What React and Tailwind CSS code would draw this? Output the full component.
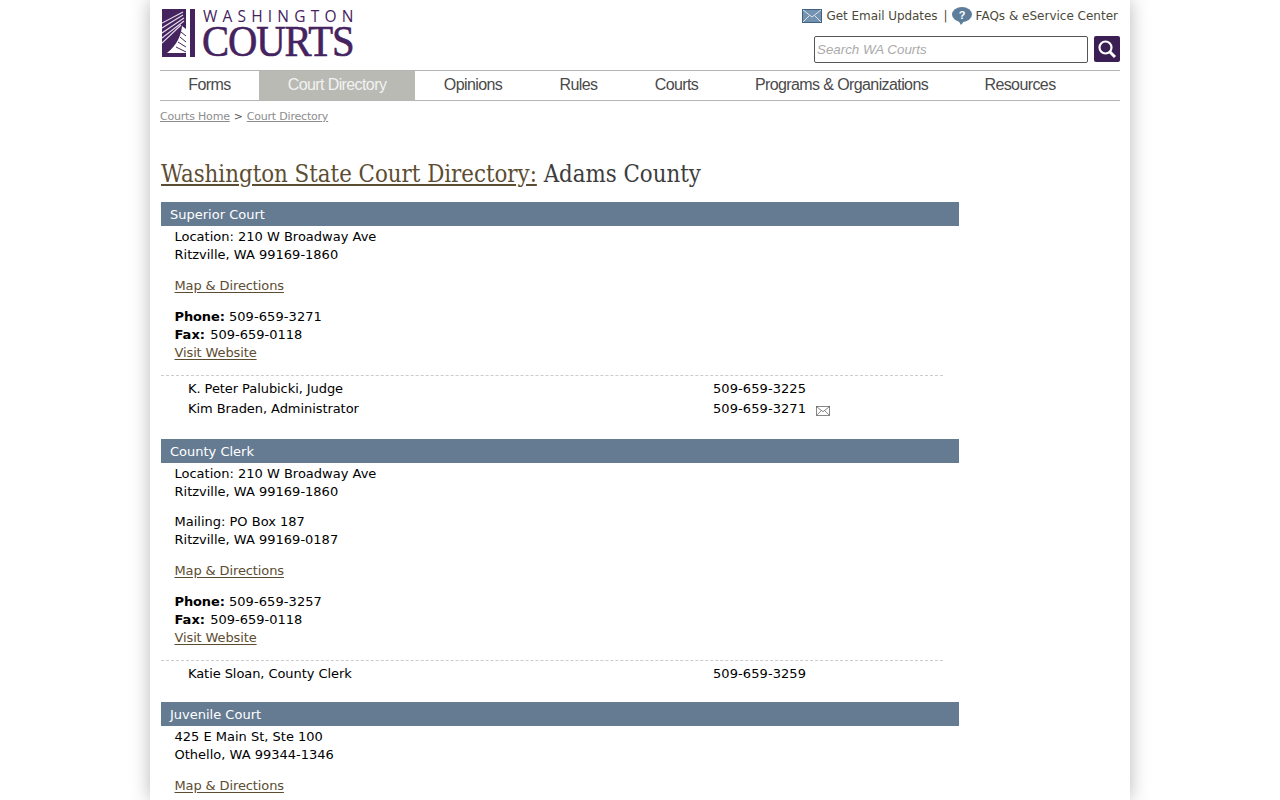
const verdana = "font-['DejaVu_Sans',sans-serif]";

function Logo() {
  return (
    <div className="relative w-[194px] h-[60px]">
      <svg width="34" height="48" viewBox="0 0 34 48" className="absolute left-[2px] top-[9px]">
        <rect width="24" height="48" fill="#45235f" />
        <rect x="28" width="5" height="48" fill="#45235f" />
        <g stroke="#e6dfeb" fill="none" strokeWidth="1.1">
          <path d="M0 14 L21 3" />
          <path d="M0 19 L21 6" />
          <path d="M0 24 L22 9" />
          <path d="M0 29 L22 12" />
          <path d="M0 34 L19 16" />
        </g>
        <path d="M20 17 C19 27 15 36 5 44 L24 44 L24 20 Z" fill="#fff" />
        <path d="M14 38 L24 43 M16 33 L24 38 M18 28 L24 33 M19 23 L24 27" stroke="#45235f" strokeWidth="1" />
        <path d="M24 0 L28 0 L28 48 L24 48Z" fill="#fff" />
      </svg>
      <div className="absolute left-[43px] top-[9px] font-['Open_Sans',sans-serif] text-[15.5px] leading-[14px] tracking-[5.2px] text-[#45235f] whitespace-nowrap">WASHINGTON</div>
      <div className="absolute left-[42px] top-[26px] font-['Liberation_Serif',serif] text-[44px] leading-[32px] tracking-[-1.2px] text-[#45235f] whitespace-nowrap origin-left scale-x-[0.925] [-webkit-text-stroke:0.6px_#45235f]">COURTS</div>
    </div>
  );
}

function Nav() {
  const items = [
    ["Forms", "w-[99px]"],
    ["Court Directory", "w-[156px]"],
    ["Opinions", "w-[116px]"],
    ["Rules", "w-[95px]"],
    ["Courts", "w-[101px]"],
    ["Programs & Organizations", "w-[229px]"],
    ["Resources", "w-[128px]"],
  ];
  return (
    <nav className="mt-[10px] flex h-[31px] border-y border-[#b5b5b5] font-['Liberation_Sans',sans-serif] text-[16px] tracking-[-0.6px] leading-[28px] text-[#4a4a4a]">
      {items.map(([t, w], i) => (
        <div key={t} className={`${w} text-center ${i === 1 ? "bg-[#b9bab4] text-[#f2f2f2]" : ""}`}>{t}</div>
      ))}
    </nav>
  );
}

function Mail({ className, stroke = "#555", fill = "#fff", line }) {
  return (
    <svg viewBox="0 0 20 14" className={className}>
      <rect x="0.5" y="0.5" width="19" height="13" fill={fill} stroke={stroke} />
      <path d="M1 1 L10 8 L19 1 M1 13 L7.5 6.5 M19 13 L12.5 6.5" fill="none" stroke={line || stroke} />
    </svg>
  );
}

function Line({ children }) {
  return <div className="h-[18px] leading-[18px]">{children}</div>;
}

function A({ children }) {
  return <a className="underline text-[#5c4d32] underline-offset-2 tracking-[-0.12px]">{children}</a>;
}

function Contact({ name, phone, mail }) {
  return (
    <div className={`flex leading-[20px] pl-[27px] ${mail ? "h-[22px]" : "h-[20px]"}`}>
      <div className="w-[525px] tracking-[-0.07px]">{name}</div>
      <div className="flex items-start tracking-[0.08px]">
        {phone}
        {mail && <Mail className="ml-[10px] mt-[7px] w-[14px] h-[10px]" />}
      </div>
    </div>
  );
}

function Section({ title, address, mailing, phone, fax, contacts }) {
  return (
    <section className="w-[798px] mb-[9px]">
      <h2 className="h-[24px] leading-[25px] bg-[#657b92] pl-[9px] text-white font-normal text-[13px]">{title}</h2>
      <div className="pl-[13.5px] pt-[2px]">
        <div className={mailing ? "mb-[12px]" : "mb-[13px]"}>{address.map((l) => <Line key={l}>{l}</Line>)}</div>
        {mailing && <div className="mb-[13px]">{mailing.map((l) => <Line key={l}>{l}</Line>)}</div>}
        <div className="mb-[13px]"><Line><A>Map &amp; Directions</A></Line></div>
        {phone && (
          <div>
            <Line><b className="tracking-[-0.12px]">Phone:</b> <span className="tracking-[0.08px]">{phone}</span></Line>
            <Line><b>Fax:</b> <span className="ml-[1px]">{fax}</span></Line>
            <Line><A>Visit Website</A></Line>
          </div>
        )}
      </div>
      {contacts && (
        <div className="w-[782px] mt-[13px] border-t border-dashed border-[#cccccc] pt-[3px] pb-[9px]">
          {contacts.map((c) => <Contact key={c.name} {...c} />)}
        </div>
      )}
    </section>
  );
}

export default function App() {
  return (
    <div className="h-[800px] overflow-hidden bg-white">
      <div className={`mx-auto w-[980px] h-[800px] px-[10px] bg-white shadow-[0_0_18px_rgba(0,0,0,0.28)] ${verdana} text-[13px] text-black`}>
        <header className="flex justify-between h-[60px]">
          <Logo />
          <div className="flex flex-col items-end">
            <div className="flex items-center h-[14px] mt-[9px] text-[#4c4a3c] text-[12px] whitespace-nowrap">
              <Mail className="w-[20px] h-[14px] mr-[5px]" stroke="#3f6080" fill="#7392af" line="#dce4ec" />
              <span className="tracking-[-0.06px]">Get Email Updates</span>
              <span className="ml-[6px] mr-[4px]">|</span>
              <svg viewBox="0 0 20 18" className="w-[20px] h-[18px] mr-[4px]">
                <ellipse cx="10" cy="7.5" rx="10" ry="7.5" fill="#5e7d9b" />
                <path d="M6 13 L13 13 L9 18Z" fill="#5e7d9b" />
                <text x="10" y="11.5" fontSize="11" fontWeight="700" fill="#fff" textAnchor="middle" fontFamily="Liberation Sans">?</text>
              </svg>
              <span className="mr-[2px]">FAQs &amp; eService Center</span>
            </div>
            <div className="flex mt-[13px]">
              <div className="w-[274px] h-[27px] border border-[#555] rounded-[2px] pl-[2px] font-['Liberation_Sans',sans-serif] italic text-[13.33px] leading-[25px] text-[#aaa]">Search WA Courts</div>
              <div className="ml-[6px] w-[26px] h-[26px] rounded-[2px] bg-[#3b1f54] flex items-center justify-center">
                <svg viewBox="0 0 20 20" className="w-[20px] h-[20px]" fill="none" stroke="#fff" strokeWidth="2.2">
                  <circle cx="8.5" cy="8.5" r="6" />
                  <path d="M13 13 L18 18" strokeWidth="3" />
                </svg>
              </div>
            </div>
          </div>
        </header>
        <Nav />
        <div className="mt-[9px] text-[11px] leading-[14px] tracking-[-0.2px] text-[#777]">
          <span className="underline text-[#8d8d8d]">Courts Home</span>
          <span className="mx-[4px] text-[#555]">&gt;</span>
          <span className="underline text-[#8d8d8d]">Court Directory</span>
        </div>
        <div className="ml-[1px]">
          <h1 className="mt-[35px] mb-[12px] h-[31px] leading-[31px] font-['DejaVu_Serif_Condensed','DejaVu_Serif',serif] font-normal text-[23.75px] text-[#3d3d3d] whitespace-nowrap">
            <span className="underline text-[#5c4d32] underline-offset-2">Washington State Court Directory:</span> Adams County
          </h1>
          <Section
            title="Superior Court"
            address={["Location: 210 W Broadway Ave", "Ritzville, WA 99169-1860"]}
            phone="509-659-3271"
            fax="509-659-0118"
            contacts={[
              { name: "K. Peter Palubicki, Judge", phone: "509-659-3225" },
              { name: "Kim Braden, Administrator", phone: "509-659-3271", mail: true },
            ]}
          />
          <Section
            title="County Clerk"
            address={["Location: 210 W Broadway Ave", "Ritzville, WA 99169-1860"]}
            mailing={["Mailing: PO Box 187", "Ritzville, WA 99169-0187"]}
            phone="509-659-3257"
            fax="509-659-0118"
            contacts={[{ name: "Katie Sloan, County Clerk", phone: "509-659-3259" }]}
          />
          <Section
            title="Juvenile Court"
            address={["425 E Main St, Ste 100", "Othello, WA 99344-1346"]}
          />
        </div>
      </div>
    </div>
  );
}
